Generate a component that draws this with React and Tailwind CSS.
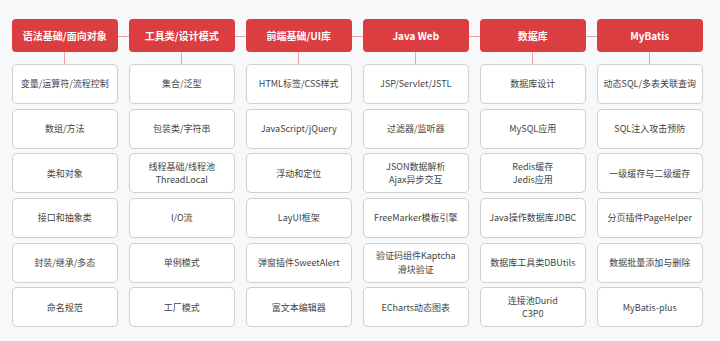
import React from "react";

const columns = [
  {
    title: "语法基础/面向对象",
    items: [["变量/运算符/流程控制"], ["数组/方法"], ["类和对象"], ["接口和抽象类"], ["封装/继承/多态"], ["命名规范"]],
  },
  {
    title: "工具类/设计模式",
    items: [["集合/泛型"], ["包装类/字符串"], ["线程基础/线程池", "ThreadLocal"], ["I/O流"], ["单例模式"], ["工厂模式"]],
  },
  {
    title: "前端基础/UI库",
    items: [["HTML标签/CSS样式"], ["JavaScript/jQuery"], ["浮动和定位"], ["LayUI框架"], ["弹窗插件SweetAlert"], ["富文本编辑器"]],
  },
  {
    title: "Java Web",
    items: [["JSP/Servlet/JSTL"], ["过滤器/监听器"], ["JSON数据解析", "Ajax异步交互"], ["FreeMarker模板引擎"], ["验证码组件Kaptcha", "滑块验证"], ["ECharts动态图表"]],
  },
  {
    title: "数据库",
    items: [["数据库设计"], ["MySQL应用"], ["Redis缓存", "Jedis应用"], ["Java操作数据库JDBC"], ["数据库工具类DBUtils"], ["连接池Durid", "C3P0"]],
  },
  {
    title: "MyBatis",
    items: [["动态SQL/多表关联查询"], ["SQL注入攻击预防"], ["一级缓存与二级缓存"], ["分页插件PageHelper"], ["数据批量添加与删除"], ["MyBatis-plus"]],
  },
];

export default function App() {
  return (
    <div
      className="w-[720px] h-[341px] bg-[#f7f8fa] overflow-hidden pt-[19px] pl-[12px]"
      style={{ fontFamily: '"Noto Sans CJK SC", "Noto Sans", sans-serif' }}
    >
      <div className="grid grid-cols-[repeat(6,105.5px)] gap-x-[11.5px]">
        {columns.map((col, ci) => (
          <div key={ci} className="flex flex-col items-stretch">
            <div className="relative h-[33px] rounded-[4px] bg-[#dc3d40] flex items-center justify-center text-white text-[10px] font-bold leading-none">
              {col.title}
              {ci < columns.length - 1 && (
                <div className="absolute left-full top-1/2 w-[11.5px] h-px bg-[#eca4a6]" />
              )}
            </div>
            <div className="h-[12px] w-px bg-[#eca4a6] self-center" />
            <div className="flex flex-col gap-[4.7px]">
              {col.items.map((lines, ii) => (
                <div
                  key={ii}
                  className="h-[40px] rounded-[5px] border border-[#cfcfcf] bg-white flex flex-col items-center justify-center text-[9px] leading-[13.5px] text-[#444]"
                >
                  {lines.map((l, li) => (
                    <span key={li}>{l}</span>
                  ))}
                </div>
              ))}
            </div>
          </div>
        ))}
      </div>
    </div>
  );
}
